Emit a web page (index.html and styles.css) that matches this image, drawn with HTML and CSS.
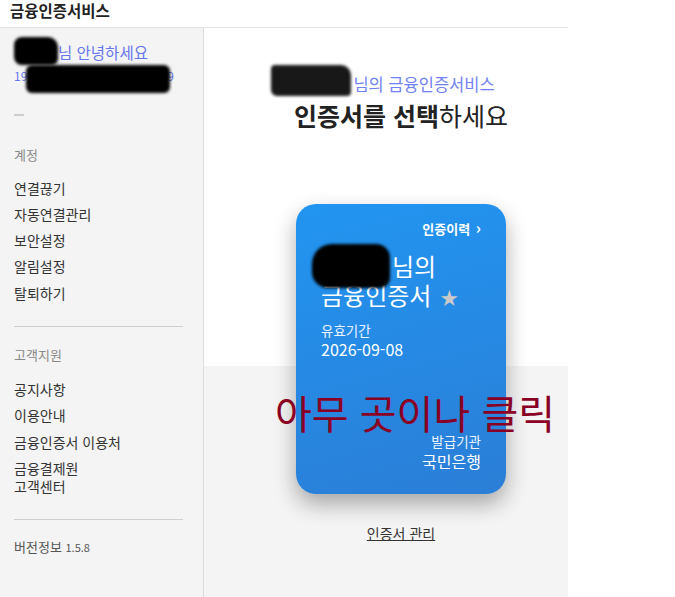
FILE: index.html
```html
<!DOCTYPE html>
<html lang="ko">
<head>
    <meta charset="UTF-8">
    <title>금융인증서비스</title>
    <link rel="stylesheet" href="styles.css">
</head>
<body>
    <div class="app">
        <div class="header">금융인증서비스</div>
        <div class="layout">
            <div class="sidebar">
                <div class="greeting">
                    <div class="greeting-name"><span class="mask mask-name"></span>님 안녕하세요</div>
                    <div class="greeting-id">19<span class="mask mask-id"></span>9</div>
                </div>
                <div class="dash"></div>

                <div class="menu-title">계정</div>
                <ul class="menu">
                    <li>연결끊기</li>
                    <li>자동연결관리</li>
                    <li>보안설정</li>
                    <li>알림설정</li>
                    <li>탈퇴하기</li>
                </ul>
                <hr class="divider">

                <div class="menu-title">고객지원</div>
                <ul class="menu">
                    <li>공지사항</li>
                    <li>이용안내</li>
                    <li>금융인증서 이용처</li>
                    <li>금융결제원<br>고객센터</li>
                </ul>
                <hr class="divider">

                <div class="version">버전정보 <small>1.5.8</small></div>
            </div>

            <div class="main">
                <div class="title-sub"><span class="mask mask-title"></span>님의 금융인증서비스</div>
                <h1 class="title"><b>인증서를 선택</b>하세요</h1>

                <div class="card">
                    <div class="card-history">인증이력 <span class="chevron">&rsaquo;</span></div>
                    <div class="card-name">
                        <span class="mask mask-card"></span>님의<br>
                        금융인증서 <span class="star">&#9733;</span>
                    </div>
                    <div class="card-label">유효기간</div>
                    <div class="card-date">2026-09-08</div>
                    <div class="card-issuer">
                        <div class="card-label">발급기관</div>
                        <div class="card-bank">국민은행</div>
                    </div>
                </div>

                <a class="manage" href="#">인증서 관리</a>

                <div class="click-hint">아무 곳이나 클릭</div>
            </div>
        </div>
    </div>
</body>
</html>
```

FILE: styles.css
```css
body {
    margin: 0;
    background: #fff;
    font-family: "Noto Sans CJK KR", "Noto Sans", sans-serif;
    color: #333;
}

.app {
    width: 568px;
}

.header {
    height: 27px;
    padding-left: 10px;
    line-height: 20px;
    font-size: 15.5px;
    font-weight: bold;
    color: #222;
    border-bottom: 1px solid #e2e2e2;
}

.layout {
    display: flex;
    height: 569px;
}

/* blurred name masks: margins add up to zero so the line box keeps its height */
.mask {
    display: inline-block;
    background: #000;
    filter: blur(1.5px);
    vertical-align: middle;
}

/* sidebar */
.sidebar {
    width: 189px;
    padding-left: 14px;
    background: #f4f4f4;
    border-right: 1px solid #dcdcdc;
}

.greeting {
    padding-top: 13px;
    color: #6676ee;
}

.greeting-name {
    font-size: 15.5px;
    line-height: 22px;
}

.greeting-id {
    font-size: 12px;
    line-height: 20px;
    margin-top: 3px;
}

.mask-name {
    width: 44px;
    height: 28px;
    border-radius: 8px 10px 6px 8px;
    margin-top: -18px;
    margin-bottom: -10px;
}

.mask-id {
    width: 144px;
    height: 28px;
    border-radius: 6px;
    margin: -13px -3px -15px -1px;
}

.dash {
    width: 10px;
    height: 2px;
    background: #ccc;
    margin-top: 28px;
}

.menu-title {
    font-size: 13px;
    color: #888;
    margin-top: 30px;
    line-height: 18px;
}

.divider + .menu-title {
    margin-top: 19px;
}

.menu {
    list-style: none;
    margin: 14.5px 0 0;
    padding: 0;
}

.divider + .menu-title + .menu {
    margin-top: 16.5px;
}

.menu li {
    font-size: 14px;
    line-height: 18px;
    margin-bottom: 8.25px;
}

.divider {
    width: 169px;
    margin: 24px 0 0;
    border: 0;
    border-top: 1px solid #cfcfcf;
}

.version {
    font-size: 13px;
    line-height: 18px;
    color: #555;
    margin-top: 18px;
}

.version small {
    font-size: 11px;
}

/* main */
.main {
    flex: 1;
    position: relative;
    padding-left: 30px;
    display: flex;
    flex-direction: column;
    align-items: center;
    background: linear-gradient(to bottom, #fff 338px, #f4f4f4 338px);
}

.title-sub {
    margin: 44px 36px 0 0;
    font-size: 16.5px;
    line-height: 24px;
    color: #7081f2;
}

.mask-title {
    width: 80px;
    height: 31px;
    border-radius: 4px 10px 4px 6px;
    margin: -21.5px 2px -9.5px 0;
    opacity: 0.9;
}

.title {
    margin: 3px 0 0;
    font-size: 25px;
    line-height: 32px;
    font-weight: normal;
    color: #222;
}

.card {
    width: 210px;
    height: 290px;
    box-sizing: border-box;
    margin-top: 73px;
    padding: 13px 25px 0;
    border-radius: 20px;
    background: linear-gradient(165deg, #2195f1, #2b7ed6);
    color: #fff;
    box-shadow: 0 10px 22px rgba(0, 0, 0, 0.32);
    display: flex;
    flex-direction: column;
}

.card-history {
    align-self: flex-end;
    font-size: 13px;
    font-weight: bold;
    line-height: 20px;
}

.chevron {
    font-size: 16px;
    margin-left: 2px;
}

.card-name {
    margin-top: 13px;
    font-size: 24px;
    line-height: 28.5px;
}

.mask-card {
    width: 78px;
    height: 44px;
    border-radius: 20px 14px 10px 16px;
    margin: -25px 2px -19px -9px;
}

.star {
    color: #c9c9c9;
    font-size: 18px;
    margin-left: 2px;
}

.card-label {
    font-size: 13.5px;
    line-height: 18px;
    margin-top: 10px;
    color: #eef4ff;
}

.card-date {
    font-size: 16px;
    line-height: 20px;
}

.card-issuer {
    margin-top: 73px;
    align-self: flex-end;
    text-align: right;
}

.card-issuer .card-label {
    margin-top: 0;
}

.card-bank {
    font-size: 16px;
    line-height: 22px;
}

.manage {
    margin-top: 29px;
    font-size: 14px;
    line-height: 20px;
    color: #333;
    text-decoration: underline;
}

.click-hint {
    position: absolute;
    top: 358px;
    left: 71px;
    font-size: 40px;
    line-height: 52px;
    color: #8a0024;
    white-space: nowrap;
}
```
